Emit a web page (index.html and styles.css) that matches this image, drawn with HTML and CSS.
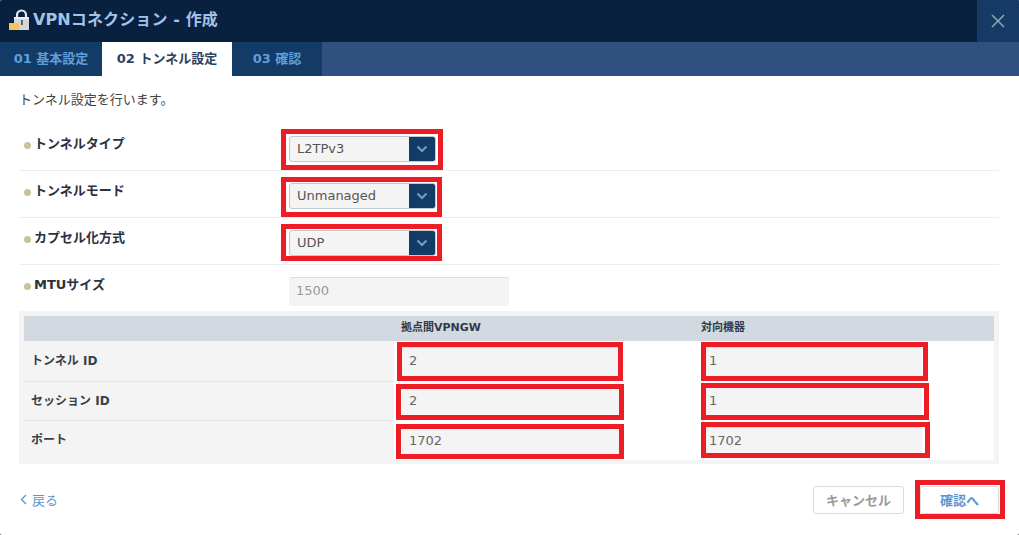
FILE: index.html
```html
<!DOCTYPE html>
<html lang="ja">
<head>
<meta charset="utf-8">
<title>VPNコネクション - 作成</title>
<link rel="stylesheet" href="styles.css">
</head>
<body>
<div class="dialog">
  <header class="titlebar">
    <svg class="lock" width="26" height="24" viewBox="0 0 26 24">
      <path d="M9 9V6a4.500 4.500 0 0 1 9 0V9" fill="none" stroke="#e6e8ea" stroke-width="2.200"/>
      <rect x="6" y="8" width="15" height="13" fill="#d4d6d8"/>
      <rect x="6" y="8" width="15" height="2" fill="#eceeef"/>
      <rect x="13" y="11" width="1.800" height="5" fill="#55585c"/>
      <rect x="1" y="14" width="10" height="7" fill="#f8c25c"/>
    </svg>
    <h1 class="title">VPNコネクション - 作成</h1>
    <button class="close" aria-label="閉じる">
      <svg width="14" height="14" viewBox="0 0 14 14"><path d="M1 1l12 12M13 1L1 13" stroke="#8fa3b5" stroke-width="1.600" fill="none"/></svg>
    </button>
  </header>
  <nav class="tabs">
    <a class="tab tab-1">01 基本設定</a>
    <a class="tab tab-2 active">02 トンネル設定</a>
    <a class="tab tab-3">03 確認</a>
  </nav>
  <main class="content">
    <p class="lead">トンネル設定を行います。</p>
    <div class="row">
      <div class="label">トンネルタイプ</div>
      <div class="select"><span class="select-value">L2TPv3</span><span class="select-btn"><svg width="12" height="8" viewBox="0 0 12 8"><path d="M1.500 1.500L6 6l4.500-4.500" fill="none" stroke="#6f9fd0" stroke-width="2"/></svg></span></div>
    </div>
    <div class="row">
      <div class="label">トンネルモード</div>
      <div class="select"><span class="select-value">Unmanaged</span><span class="select-btn"><svg width="12" height="8" viewBox="0 0 12 8"><path d="M1.500 1.500L6 6l4.500-4.500" fill="none" stroke="#6f9fd0" stroke-width="2"/></svg></span></div>
    </div>
    <div class="row">
      <div class="label">カプセル化方式</div>
      <div class="select"><span class="select-value">UDP</span><span class="select-btn"><svg width="12" height="8" viewBox="0 0 12 8"><path d="M1.500 1.500L6 6l4.500-4.500" fill="none" stroke="#6f9fd0" stroke-width="2"/></svg></span></div>
    </div>
    <div class="row row-last">
      <div class="label">MTUサイズ</div>
      <div class="mtu">1500</div>
    </div>
    <div class="table-wrap">
      <div class="grid-row grid-head">
        <div></div><div class="head-cell">拠点間VPNGW</div><div class="head-cell">対向機器</div>
      </div>
      <div class="grid-row grid-first">
        <div class="name-cell">トンネル ID</div>
        <div class="val-cell"><div class="input">2</div></div>
        <div class="val-cell"><div class="input">1</div></div>
      </div>
      <div class="grid-row grid-mid">
        <div class="name-cell">セッション ID</div>
        <div class="val-cell"><div class="input">2</div></div>
        <div class="val-cell"><div class="input">1</div></div>
      </div>
      <div class="grid-row grid-end">
        <div class="name-cell">ポート</div>
        <div class="val-cell"><div class="input">1702</div></div>
        <div class="val-cell"><div class="input">1702</div></div>
      </div>
    </div>
    <footer class="footer">
      <a class="back"><svg width="7" height="11" viewBox="0 0 7 11"><path d="M6 1L1.500 5.500 6 10" fill="none" stroke="#5e97cf" stroke-width="1.400"/></svg>戻る</a>
      <div class="actions">
        <button class="btn btn-cancel">キャンセル</button>
        <button class="btn btn-next">確認へ</button>
      </div>
    </footer>
  </main>
  <div class="mark m1"></div>
  <div class="mark m2"></div>
  <div class="mark m3"></div>
  <div class="mark m4"></div>
  <div class="mark m5"></div>
  <div class="mark m6"></div>
  <div class="mark m7"></div>
  <div class="mark m8"></div>
  <div class="mark m9"></div>
  <div class="mark m10"></div>
</div>
</body>
</html>
```
FILE: styles.css
```css
* { box-sizing: border-box; }
html, body { margin: 0; padding: 0; background: #4a4a4a; }
body { font-family: "DejaVu Sans", "Noto Sans CJK JP", sans-serif; font-size: 13px; color: #333; }
.dialog { position: relative; width: 1019px; height: 535px; background: #fff; overflow: hidden; border-radius: 2px; }

.titlebar { display: flex; align-items: center; height: 42px; background: #07213f; padding-left: 8px; }
.lock { flex: none; }
.title { flex: 1; margin: 0 0 2px -1px; font-size: 16px; line-height: 40px; font-weight: 700; letter-spacing: 0.12px; color: #a3c3e8; }
.close { flex: none; width: 42px; height: 42px; padding: 0; border: 0; background: #153a66; display: flex; align-items: center; justify-content: center; }

.tabs { display: flex; height: 34px; background: #30517f; }
.tab { display: block; line-height: 34px; font-size: 13px; font-weight: 700; text-align: center; background: #143a66; color: #5f9fdc; }
.tab-1 { width: 102px; }
.tab-2 { width: 130px; }
.tab-3 { width: 90px; }
.tab.active { background: #fff; color: #2b4261; }

.content { padding: 0 20px 0 19px; }
.lead { margin: 0; height: 48px; padding-top: 15px; line-height: 18px; font-size: 13px; color: #444; }

.row { display: flex; height: 47px; border-bottom: 1px solid #e8eef3; }
.row-last { border-bottom: 0; height: 46px; }
.label { position: relative; width: 270px; padding: 11px 0 0 15px; font-size: 13px; line-height: 18px; font-weight: 700; color: #2a3140; }
.label::before { content: ""; position: absolute; left: 5px; top: 18px; width: 7px; height: 7px; border-radius: 50%; background: #c9c29a; }

.select { display: flex; width: 147px; height: 26px; margin-top: 12px; border: 1px solid #c5c8cc; border-radius: 3px; background: #f4f4f4; overflow: hidden; }
.select-value { flex: 1; padding-left: 7px; line-height: 23px; font-size: 13px; color: #555; }
.select-btn { flex: none; width: 26px; background: #143a66; display: flex; align-items: center; justify-content: center; }

.mtu { width: 220px; height: 29px; margin-top: 12px; padding-left: 7px; line-height: 26px; font-size: 13px; color: #999; background: #f4f4f4; border-radius: 3px; border-top: 1px solid #dcdcdc; }

.table-wrap { background: #f4f4f4; padding: 5px; height: 153px; }
.grid-row { display: grid; grid-template-columns: 370px 300px 300px; height: 39px; border-bottom: 1px solid #e6e6e6; }
.grid-first { height: 41px; }
.grid-end { border-bottom: 0; height: 38px; }
.grid-head { height: 25px; background: #d2d9e1; border-bottom: 0; }
.head-cell { padding-left: 7px; line-height: 24px; font-size: 11px; font-weight: 700; color: #2f3a4a; }
.name-cell { padding-left: 7px; line-height: 39px; font-size: 12px; font-weight: 700; color: #3a3f48; }
.grid-first .name-cell { line-height: 41px; }
.val-cell { background: #fff; padding: 6px 0 0 8px; }
.grid-mid .val-cell { padding-top: 5px; }
.input { width: 220px; height: 30px; padding-left: 7px; line-height: 26px; font-size: 13px; color: #666; background: #f4f4f4; border-top: 1px solid #ddd; border-radius: 3px; }

.footer { display: flex; align-items: center; justify-content: space-between; height: 56px; padding-top: 15px; }
.back { display: flex; align-items: center; gap: 5px; padding-left: 1px; font-size: 13px; color: #5e97cf; }
.actions { display: flex; gap: 16px; }
.btn { height: 28px; padding: 0; background: #fff; border: 1px solid #dcdcdc; border-radius: 3px; font: 700 13px "DejaVu Sans", "Noto Sans CJK JP", sans-serif; }
.btn-cancel { width: 91px; color: #9a9a9a; }
.btn-next { width: 79px; color: #5e97cf; }

.mark { position: absolute; border: 5px solid #ee1c25; }
.m1 { left: 281px; top: 129px; width: 162px; height: 41px; }
.m2 { left: 281px; top: 177px; width: 161px; height: 40px; }
.m3 { left: 281px; top: 224px; width: 161px; height: 37px; }
.m4 { left: 397px; top: 342px; width: 226px; height: 39px; }
.m5 { left: 396px; top: 384px; width: 228px; height: 36px; }
.m6 { left: 396px; top: 424px; width: 228px; height: 35px; }
.m7 { left: 701px; top: 342px; width: 227px; height: 39px; }
.m8 { left: 701px; top: 383px; width: 228px; height: 37px; }
.m9 { left: 701px; top: 422px; width: 229px; height: 36px; }
.m10 { left: 915px; top: 480px; width: 90px; height: 39px; }
```
